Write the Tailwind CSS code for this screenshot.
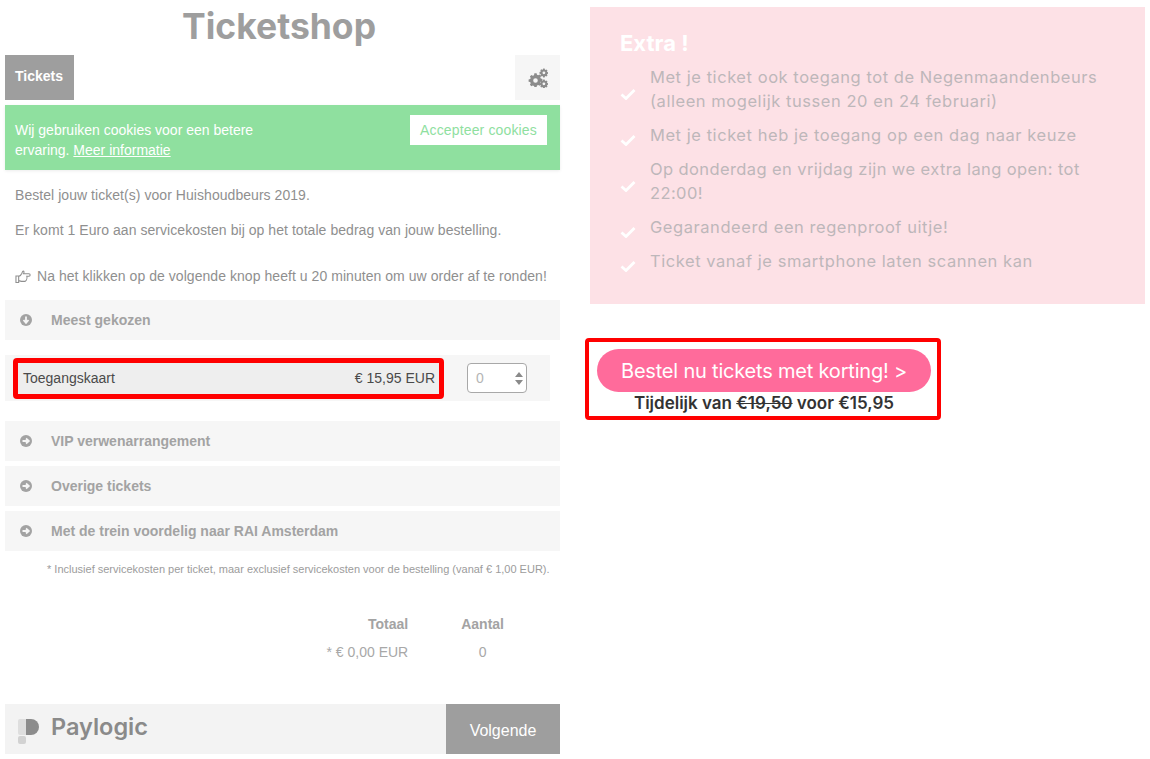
<!DOCTYPE html>
<html lang="nl">
<head>
    <meta charset="UTF-8">
    <meta name="viewport" content="width=device-width, initial-scale=1.0">
    <title>Ticketshop</title>
    <script src="https://cdn.jsdelivr.net/npm/@tailwindcss/browser@4"></script>
</head>
<body class="bg-white font-['Liberation_Sans',sans-serif] overflow-hidden">
<div class="flex w-[1150px] h-[759px] pl-[5px] overflow-hidden">

    <!-- ticket widget -->
    <div class="w-[555px] shrink-0">
        <h1 class="h-[55px] pl-[177px] pt-[5px] text-[35.5px] leading-[44px] font-bold text-[#9e9e9e] font-['Inter',sans-serif]">Ticketshop</h1>

        <div class="flex justify-between h-[45px]">
            <div class="w-[69px] bg-[#9e9e9e] text-white text-[14px] font-bold pl-[10px] pt-[12px] leading-[18px]">Tickets</div>
            <div class="w-[45px] bg-[#f6f6f6] flex items-center justify-center pt-[1px]">
                <svg class="w-[20px] h-[20px] text-[#8c8c8c]" viewBox="0 0 20 20" fill="currentColor">
                    <path fill-rule="evenodd" d="M6.400 5.200h2.200l.4 1.600 1.200.5 1.400-.8 1.500 1.500-.8 1.400.5 1.200 1.600.4v2.200l-1.600.4-.5 1.200.8 1.400-1.500 1.500-1.400-.8-1.200.5-.4 1.600H6.400L6 17.900l-1.200-.5-1.400.8-1.500-1.500.8-1.400-.5-1.200-1.600-.4V11.500l1.600-.4.5-1.200-.8-1.400 1.500-1.500 1.400.8 1.200-.5zM7.500 10.200a2.300 2.300 0 1 0 0 4.600 2.300 2.300 0 0 0 0-4.600z"/>
                    <path fill-rule="evenodd" d="M15.200.6h1.400l.3 1 .7.3.9-.5 1 1-.5.9.3.7 1 .3v1.400l-1 .3-.3.7.5.9-1 1-.9-.5-.7.3-.3 1h-1.400l-.3-1-.7-.3-.9.5-1-1 .5-.9-.3-.7-1-.3V4.100l1-.3.3-.7-.5-.9 1-1 .9.5.7-.3zM15.900 3.400a1.400 1.400 0 1 0 0 2.800 1.400 1.400 0 0 0 0-2.800z"/>
                    <path fill-rule="evenodd" d="M15.200 11.600h1.400l.3 1 .7.3.9-.5 1 1-.5.9.3.7 1 .3v1.400l-1 .3-.3.7.5.9-1 1-.9-.5-.7.3-.3 1h-1.400l-.3-1-.7-.3-.9.5-1-1 .5-.9-.3-.7-1-.3v-1.400l1-.3.3-.7-.5-.9 1-1 .9.5.7-.3zM15.900 14.400a1.400 1.400 0 1 0 0 2.800 1.400 1.400 0 0 0 0-2.800z"/>
                </svg>
            </div>
        </div>

        <div class="mt-[5px] h-[65px] bg-[#8fe09f] shadow-[0_1px_3px_rgba(0,0,0,0.08)] flex justify-between pl-[10px] pr-[13px] pt-[10px] text-white text-[14px]">
            <p class="w-[270px] leading-[20px] pt-[5px]">Wij gebruiken cookies voor een betere ervaring. <a class="underline">Meer informatie</a></p>
            <button class="w-[137px] h-[30px] bg-white text-[#8fe09f] text-[14px] tracking-[0.15px]">Accepteer cookies</button>
        </div>

        <div class="px-[10px] pt-[16px] text-[14px] leading-[18px] text-[#8f8f8f] tracking-[0.05px]">
            <p>Bestel jouw ticket(s) voor Huishoudbeurs 2019.</p>
            <p class="mt-[17px]">Er komt 1 Euro aan servicekosten bij op het totale bedrag van jouw bestelling.</p>
            <p class="mt-[28px] flex items-center gap-[6px] whitespace-nowrap">
                <svg class="w-[16px] h-[13px] shrink-0" viewBox="0 0 14 12" fill="none" stroke="currentColor" stroke-width="1">
                    <path d="M.5 5.500h2.500v6H.5zM3 6c1.300-.5 2.500-1.800 3-3 .3-.8.5-2 1.200-2 .8 0 1 1 .3 2.500H12.500a1 1 0 0 1 0 2.200H10.500c.4 1.300 0 3.800-1.500 4.800H5.500L3 9.800"/>
                </svg>
                Na het klikken op de volgende knop heeft u 20 minuten om uw order af te ronden!
            </p>
        </div>

        <div class="mt-[15px] h-[40px] bg-[#f6f6f6] flex items-center pl-[15px] text-[14px] font-bold text-[#a3a3a3] gap-[19px]">
            <svg class="w-[12px] h-[12px] shrink-0" viewBox="0 0 12 12"><circle cx="6" cy="6" r="6" fill="#a3a3a3"/><path d="M6 2.500v6M3.500 6 6 8.800 8.500 6" fill="none" stroke="#f6f6f6" stroke-width="1.800"/></svg>
            Meest gekozen
        </div>

        <div class="mt-[15px] w-[545px] h-[46px] bg-[#f6f6f6] flex items-center pl-[8px] relative">
            <div class="w-[431px] h-[41px] bg-[#eeeeee] border-[5px] border-[#ff0000] rounded-[4px] flex items-center justify-between pl-[5px] pr-[4px] text-[14px] text-[#4a4a4a] whitespace-nowrap">
                <span>Toegangskaart</span>
                <span>€ 15,95 EUR</span>
            </div>
            <div class="ml-[23px] w-[60px] h-[30px] bg-white border border-[#a8a8a8] rounded-[4px] flex items-center justify-between pl-[8px] pr-[3px] text-[14px] text-[#b5b5b5]">
                0
                <svg class="w-[8px] h-[13px]" viewBox="0 0 8 13" fill="#8a8a8a"><path d="M4 0 8 5H0zM0 8h8l-4 5z"/></svg>
            </div>
        </div>

        <div class="mt-[20px] flex flex-col gap-[5px]">
            <div class="h-[40px] bg-[#f6f6f6] flex items-center pl-[15px] text-[14px] font-bold text-[#a3a3a3] gap-[19px]">
                <svg class="w-[12px] h-[12px] shrink-0" viewBox="0 0 12 12"><circle cx="6" cy="6" r="6" fill="#a3a3a3"/><path d="M2.500 6h6M6 3.500 8.800 6 6 8.500" fill="none" stroke="#f6f6f6" stroke-width="1.800"/></svg>
                VIP verwenarrangement
            </div>
            <div class="h-[40px] bg-[#f6f6f6] flex items-center pl-[15px] text-[14px] font-bold text-[#a3a3a3] gap-[19px]">
                <svg class="w-[12px] h-[12px] shrink-0" viewBox="0 0 12 12"><circle cx="6" cy="6" r="6" fill="#a3a3a3"/><path d="M2.500 6h6M6 3.500 8.800 6 6 8.500" fill="none" stroke="#f6f6f6" stroke-width="1.800"/></svg>
                Overige tickets
            </div>
            <div class="h-[40px] bg-[#f6f6f6] flex items-center pl-[15px] text-[14px] font-bold text-[#a3a3a3] gap-[19px]">
                <svg class="w-[12px] h-[12px] shrink-0" viewBox="0 0 12 12"><circle cx="6" cy="6" r="6" fill="#a3a3a3"/><path d="M2.500 6h6M6 3.500 8.800 6 6 8.500" fill="none" stroke="#f6f6f6" stroke-width="1.800"/></svg>
                Met de trein voordelig naar RAI Amsterdam
            </div>
        </div>

        <p class="mt-[11px] pl-[42px] text-[11px] leading-[14px] text-[#9c9c9c] whitespace-nowrap">* Inclusief servicekosten per ticket, maar exclusief servicekosten voor de bestelling (vanaf € 1,00 EUR).</p>

        <div class="mt-[39px] flex justify-end text-[14px] text-[#a3a3a3] leading-[18px] pr-[56px]">
            <div class="text-right">
                <p class="font-bold">Totaal</p>
                <p class="mt-[10px] text-[#a8a8a8]">* € 0,00 EUR</p>
            </div>
            <div class="ml-[53px] text-center">
                <p class="font-bold">Aantal</p>
                <p class="mt-[10px] text-[#a8a8a8]">0</p>
            </div>
        </div>

        <div class="mt-[43px] h-[50px] bg-[#f3f3f3] flex justify-between">
            <div class="flex items-center pl-[12px] gap-[10px] pb-[4px]">
                <svg class="w-[24px] h-[26px] mt-[7px]" viewBox="0 0 24 26">
                    <rect x="1" y="1" width="9" height="16" rx="2" fill="#dedede"/>
                    <rect x="1" y="18" width="8" height="8" rx="2" fill="#d2d2d2"/>
                    <path d="M9 1h5a8 8 0 0 1 0 16H9z" fill="#8c8c8c"/>
                </svg>
                <span class="text-[23.5px] leading-[28px] font-semibold text-[#8a8a8a] font-['Inter',sans-serif]">Paylogic</span>
            </div>
            <button class="w-[114px] bg-[#9e9e9e] text-white text-[16px] pt-[3px]">Volgende</button>
        </div>
    </div>

    <!-- right column -->
    <div class="ml-[30px] w-[555px] shrink-0 pt-[7px] font-['Inter',sans-serif]">
        <div class="h-[297px] bg-[#fde1e6] pl-[30px] pr-[20px] pt-[23px]">
            <h3 class="text-[22px] leading-[26px] font-bold text-white">Extra !</h3>
            <ul class="mt-[9px] text-[16.5px] leading-[24px] text-[#bdb7ba] tracking-[0.55px]">
                <li class="flex items-center gap-[14px] h-[48px] whitespace-nowrap">
                    <svg class="w-[16px] h-[12px] shrink-0 mt-[10px]" viewBox="0 0 16 12"><path d="M1.500 6.500 6 10.500 14.500 2" fill="none" stroke="white" stroke-width="2.800"/></svg>
                    <span>Met je ticket ook toegang tot de Negenmaandenbeurs<br>(alleen mogelijk tussen 20 en 24 februari)</span>
                </li>
                <li class="flex items-center gap-[14px] h-[24px] mt-[10px] whitespace-nowrap">
                    <svg class="w-[16px] h-[12px] shrink-0 mt-[10px]" viewBox="0 0 16 12"><path d="M1.500 6.500 6 10.500 14.500 2" fill="none" stroke="white" stroke-width="2.800"/></svg>
                    <span>Met je ticket heb je toegang op een dag naar keuze</span>
                </li>
                <li class="flex items-center gap-[14px] h-[48px] mt-[10px] whitespace-nowrap">
                    <svg class="w-[16px] h-[12px] shrink-0 mt-[10px]" viewBox="0 0 16 12"><path d="M1.500 6.500 6 10.500 14.500 2" fill="none" stroke="white" stroke-width="2.800"/></svg>
                    <span class="tracking-[0.4px]">Op donderdag en vrijdag zijn we extra lang open: tot<br>22:00!</span>
                </li>
                <li class="flex items-center gap-[14px] h-[24px] mt-[10px] whitespace-nowrap">
                    <svg class="w-[16px] h-[12px] shrink-0 mt-[10px]" viewBox="0 0 16 12"><path d="M1.500 6.500 6 10.500 14.500 2" fill="none" stroke="white" stroke-width="2.800"/></svg>
                    <span>Gegarandeerd een regenproof uitje!</span>
                </li>
                <li class="flex items-center gap-[14px] h-[24px] mt-[10px] whitespace-nowrap">
                    <svg class="w-[16px] h-[12px] shrink-0 mt-[10px]" viewBox="0 0 16 12"><path d="M1.500 6.500 6 10.500 14.500 2" fill="none" stroke="white" stroke-width="2.800"/></svg>
                    <span>Ticket vanaf je smartphone laten scannen kan</span>
                </li>
            </ul>
        </div>

        <div class="mt-[34px] -ml-[5px] w-[356px] h-[82px] border-[4px] border-[#ff0000] rounded-[4px] pl-[8px] pt-[7px]">
            <div class="w-[334px] h-[43px] rounded-full bg-[#ff6b9b] text-white text-[20px] flex items-center justify-center tracking-[-0.2px]">Bestel nu tickets met korting! &gt;</div>
            <p class="w-[334px] text-center text-[17px] leading-[22px] font-semibold text-[#333333]">Tijdelijk van <s>€19,50</s> voor €15,95</p>
        </div>
    </div>
</div>
</body>
</html>
